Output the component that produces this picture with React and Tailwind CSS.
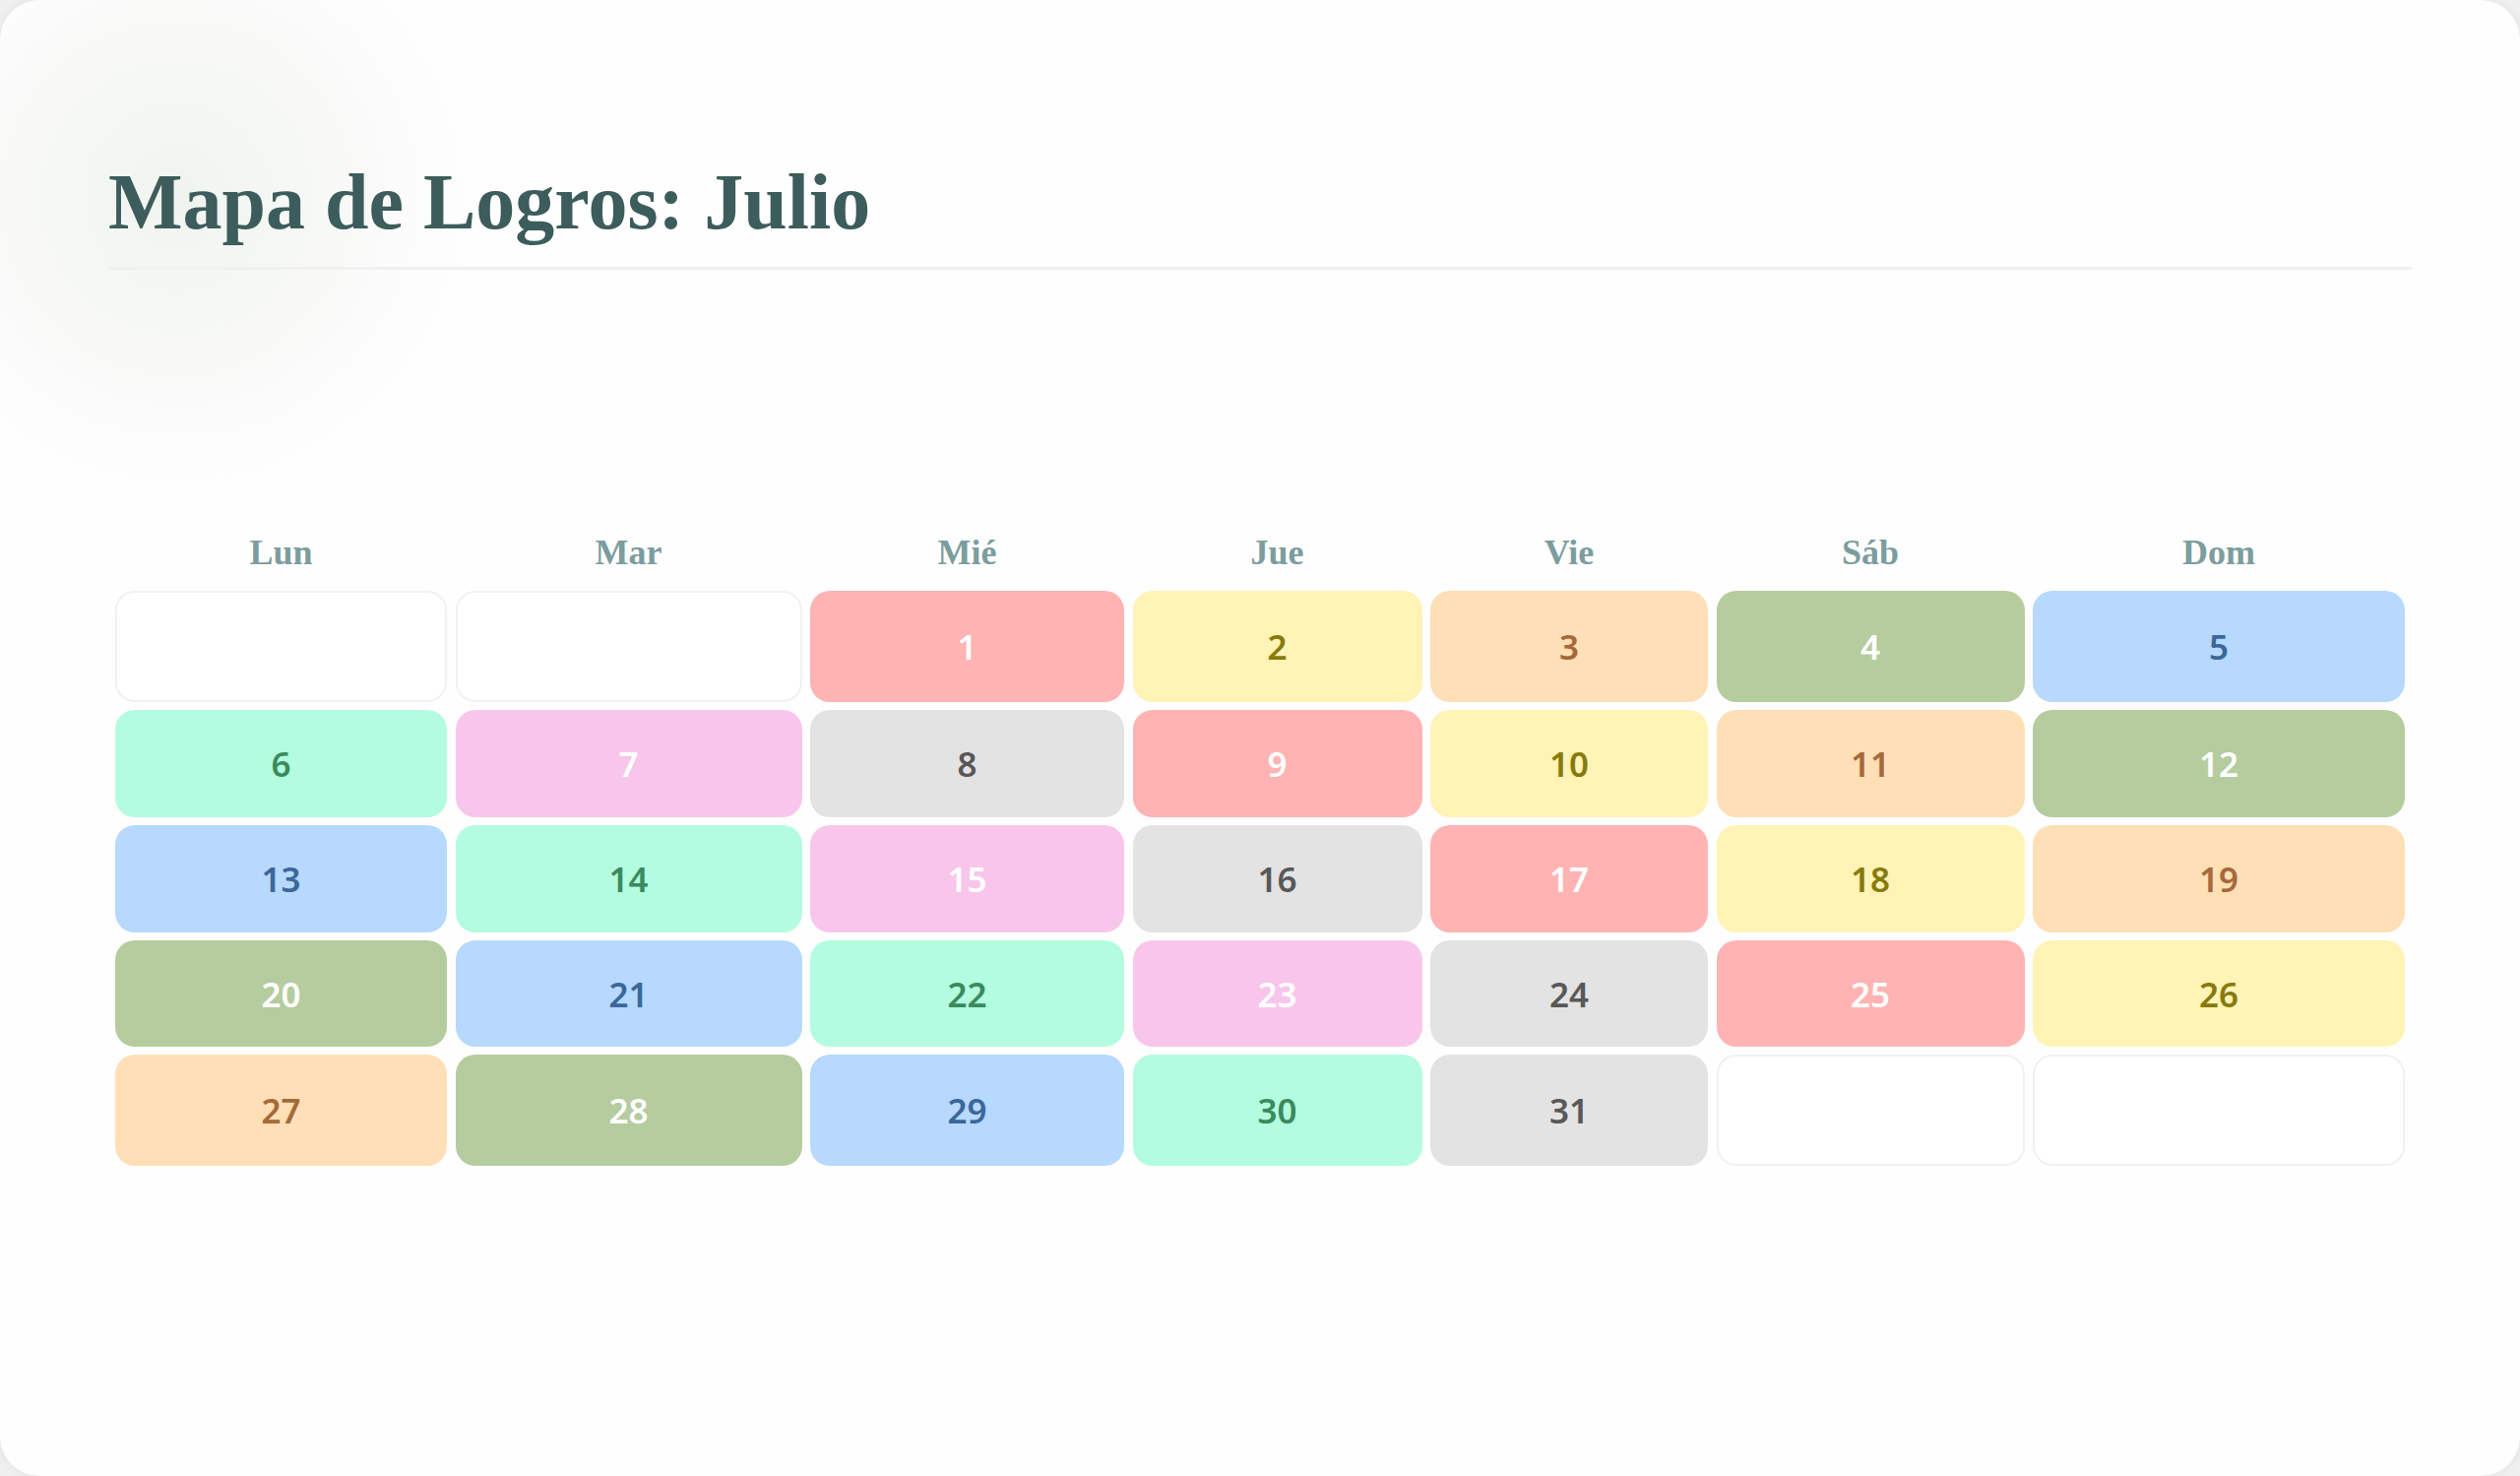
import React from 'react';

// colour swatches for the achievement cells
const tones = {
  red: 'bg-[#ffb3b3] text-white',
  yellow: 'bg-[#fff3b6] text-[#877a0c]',
  peach: 'bg-[#fedfb6] text-[#a5693a]',
  green: 'bg-[#b5cc9f] text-white',
  blue: 'bg-[#b6d9fd] text-[#3b679a]',
  mint: 'bg-[#b3fcdf] text-[#3a8a5e]',
  pink: 'bg-[#f9c6eb] text-white',
  gray: 'bg-[#e3e3e3] text-[#585858]',
};

const days = ['Lun', 'Mar', 'Mié', 'Jue', 'Vie', 'Sáb', 'Dom'];

const cells = [
  null, null, [1, 'red'], [2, 'yellow'], [3, 'peach'], [4, 'green'], [5, 'blue'],
  [6, 'mint'], [7, 'pink'], [8, 'gray'], [9, 'red'], [10, 'yellow'], [11, 'peach'], [12, 'green'],
  [13, 'blue'], [14, 'mint'], [15, 'pink'], [16, 'gray'], [17, 'red'], [18, 'yellow'], [19, 'peach'],
  [20, 'green'], [21, 'blue'], [22, 'mint'], [23, 'pink'], [24, 'gray'], [25, 'red'], [26, 'yellow'],
  [27, 'peach'], [28, 'green'], [29, 'blue'], [30, 'mint'], [31, 'gray'], null, null,
];

const cols = 'grid-cols-[337px_352px_319px_294px_282px_313px_378px]';

export default function App() {
  return (
    <div className="h-screen w-full bg-[#efefef] overflow-hidden">
      <div className="relative h-full w-full bg-[#fefefe] rounded-[40px] shadow-[0_0_12px_rgba(0,0,0,0.06)] overflow-hidden px-[110px] pt-[165px]">
        {/* soft glow top-left */}
        <div className="absolute -left-[130px] -top-[110px] w-[620px] h-[620px] rounded-full bg-[radial-gradient(circle,rgba(232,238,230,0.65)_0%,rgba(240,243,238,0.4)_40%,rgba(255,255,255,0)_70%)] pointer-events-none" />

        <div className="relative">
          <h1 className="font-['Liberation_Serif',serif] font-bold text-[80px] leading-none text-[#3d5c5c] pb-[26px] border-b-[3px] border-[#f0f0f0]">
            Mapa de Logros: Julio
          </h1>

          <div className="ml-[7px] mt-[269px]">
            <div className={`grid ${cols} gap-x-[8.5px] mb-[21px]`}>
              {days.map((d) => (
                <div key={d} className="text-center font-['Liberation_Serif',serif] font-bold text-[36px] leading-none text-[#7c9d9e]">
                  {d}
                </div>
              ))}
            </div>

            <div className={`grid ${cols} grid-rows-[113px_109px_109px_108px_113px] gap-x-[8.5px] gap-y-[8px]`}>
              {cells.map((c, i) =>
                c ? (
                  <div
                    key={i}
                    className={`flex items-center justify-center rounded-[20px] font-['Noto_Sans',sans-serif] font-semibold text-[35px] leading-none ${tones[c[1]]}`}
                  >
                    {c[0]}
                  </div>
                ) : (
                  <div key={i} className="rounded-[20px] border-2 border-[#f1f1f1] bg-white" />
                )
              )}
            </div>
          </div>
        </div>
      </div>
    </div>
  );
}
